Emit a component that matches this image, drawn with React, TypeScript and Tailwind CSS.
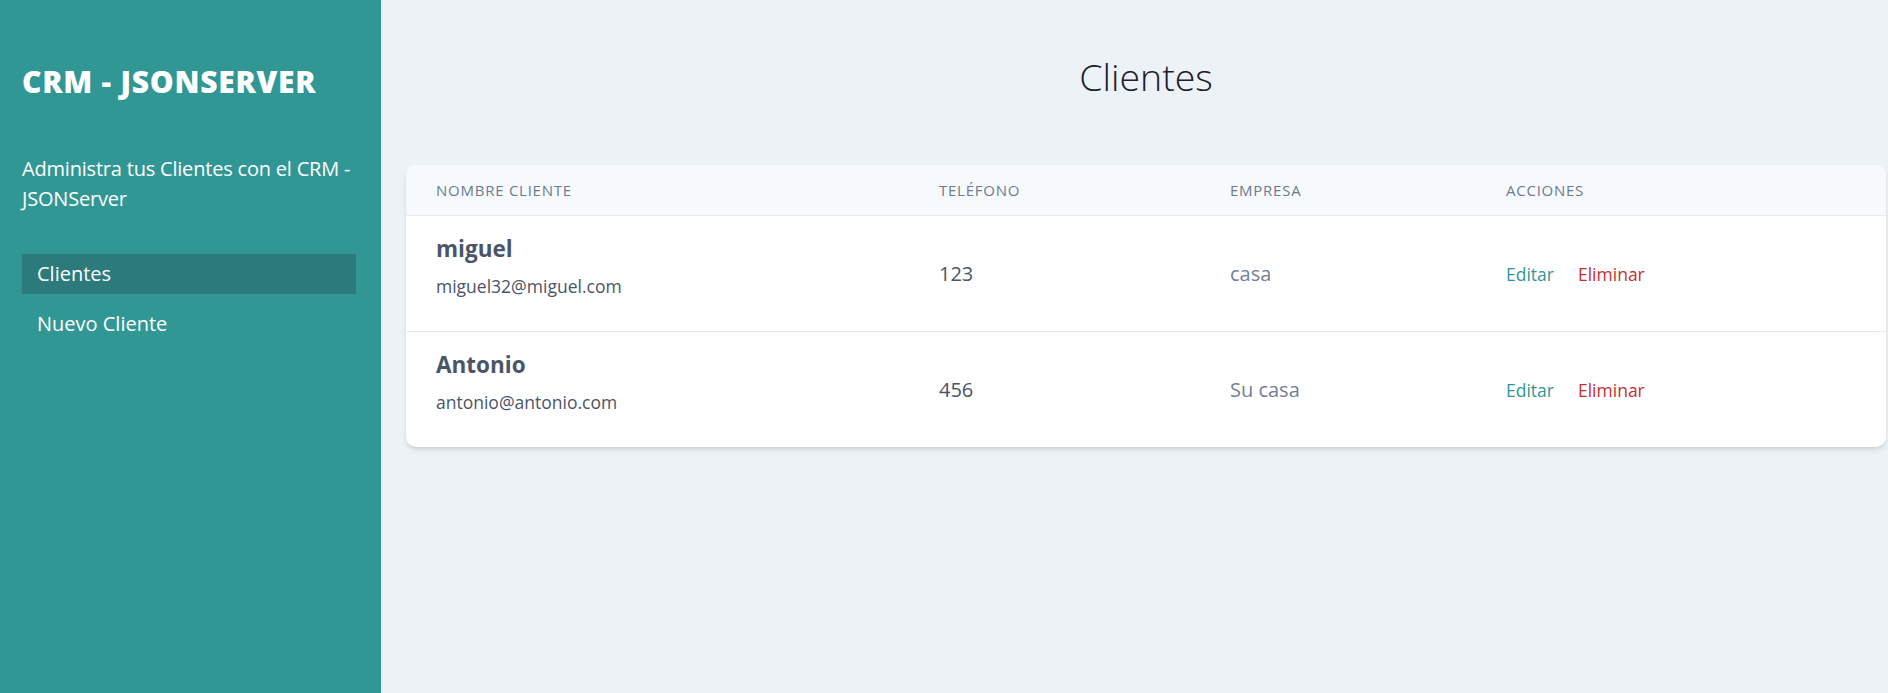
import React from "react";

type Cliente = {
  id: number;
  nombre: string;
  email: string;
  telefono: string;
  empresa: string;
};

const clientes: Cliente[] = [
  { id: 1, nombre: "miguel", email: "miguel32@miguel.com", telefono: "123", empresa: "casa" },
  { id: 2, nombre: "Antonio", email: "antonio@antonio.com", telefono: "456", empresa: "Su casa" },
];

const App = () => {
  return (
    <div className="flex min-h-screen font-['Open_Sans','Liberation_Sans',sans-serif]">
      <aside className="w-[381px] shrink-0 bg-[#319795] pl-[22px] pr-[25px] pt-[59px]">
        <h2 className="text-[30px] font-extrabold leading-[45px] tracking-[0.025em] text-white">CRM - JSONSERVER</h2>
        <p className="mt-[50px] text-[20px] leading-[30px] tracking-[-0.01em] text-white">
          Administra tus Clientes con el CRM - JSONServer
        </p>
        <nav className="mt-10 flex flex-col gap-2.5">
          <a href="#" className="block h-10 bg-[#2c7a7b] px-[15px] py-[5px] text-[20px] leading-[30px] text-white">
            Clientes
          </a>
          <a href="#" className="block h-10 px-[15px] py-[5px] text-[20px] leading-[30px] text-white">
            Nuevo Cliente
          </a>
        </nav>
      </aside>

      <main className="flex-1 bg-[#edf2f7] pl-[25px] pr-[2px] pt-[49px]">
        <h1 className="text-center text-[37.5px] font-light leading-[56px] text-[#1a202c]">Clientes</h1>

        <div className="mt-[60px] overflow-hidden rounded-[10px] bg-white shadow-md">
          <div className="grid grid-cols-[503px_291px_276px_1fr] border-b border-[#e6ebf1] bg-[#f7fafc] py-[15px] text-[15px] font-medium uppercase leading-5 tracking-wider text-[#6b7a90]">
            <div className="px-[30px]">Nombre Cliente</div>
            <div className="px-[30px]">Teléfono</div>
            <div className="px-[30px]">Empresa</div>
            <div className="px-[30px]">Acciones</div>
          </div>

          {clientes.map((cliente, i) => (
            <div
              key={cliente.id}
              className={`grid h-[115px] grid-cols-[503px_291px_276px_1fr] items-center text-[20px] leading-[30px] ${
                i < clientes.length - 1 ? "box-content border-b border-[#e6ebf1]" : ""
              }`}
            >
              <div className="self-start px-[30px] pt-[15px]">
                <p className="text-[22.5px] font-bold leading-[35px] text-[#4a5568]">{cliente.nombre}</p>
                <p className="mt-[8px] text-[17.5px] leading-[25px] text-[#4a5568]">{cliente.email}</p>
              </div>
              <div className="px-[30px] text-[#4a5568]">{cliente.telefono}</div>
              <div className="px-[30px] text-[#718096]">{cliente.empresa}</div>
              <div className="flex gap-[24px] px-[30px] pt-[2px] text-[17.5px] leading-[25px]">
                <button type="button" className="text-[#319795]">Editar</button>
                <button type="button" className="text-[#c53030]">Eliminar</button>
              </div>
            </div>
          ))}
        </div>
      </main>
    </div>
  );
};

export default App;
